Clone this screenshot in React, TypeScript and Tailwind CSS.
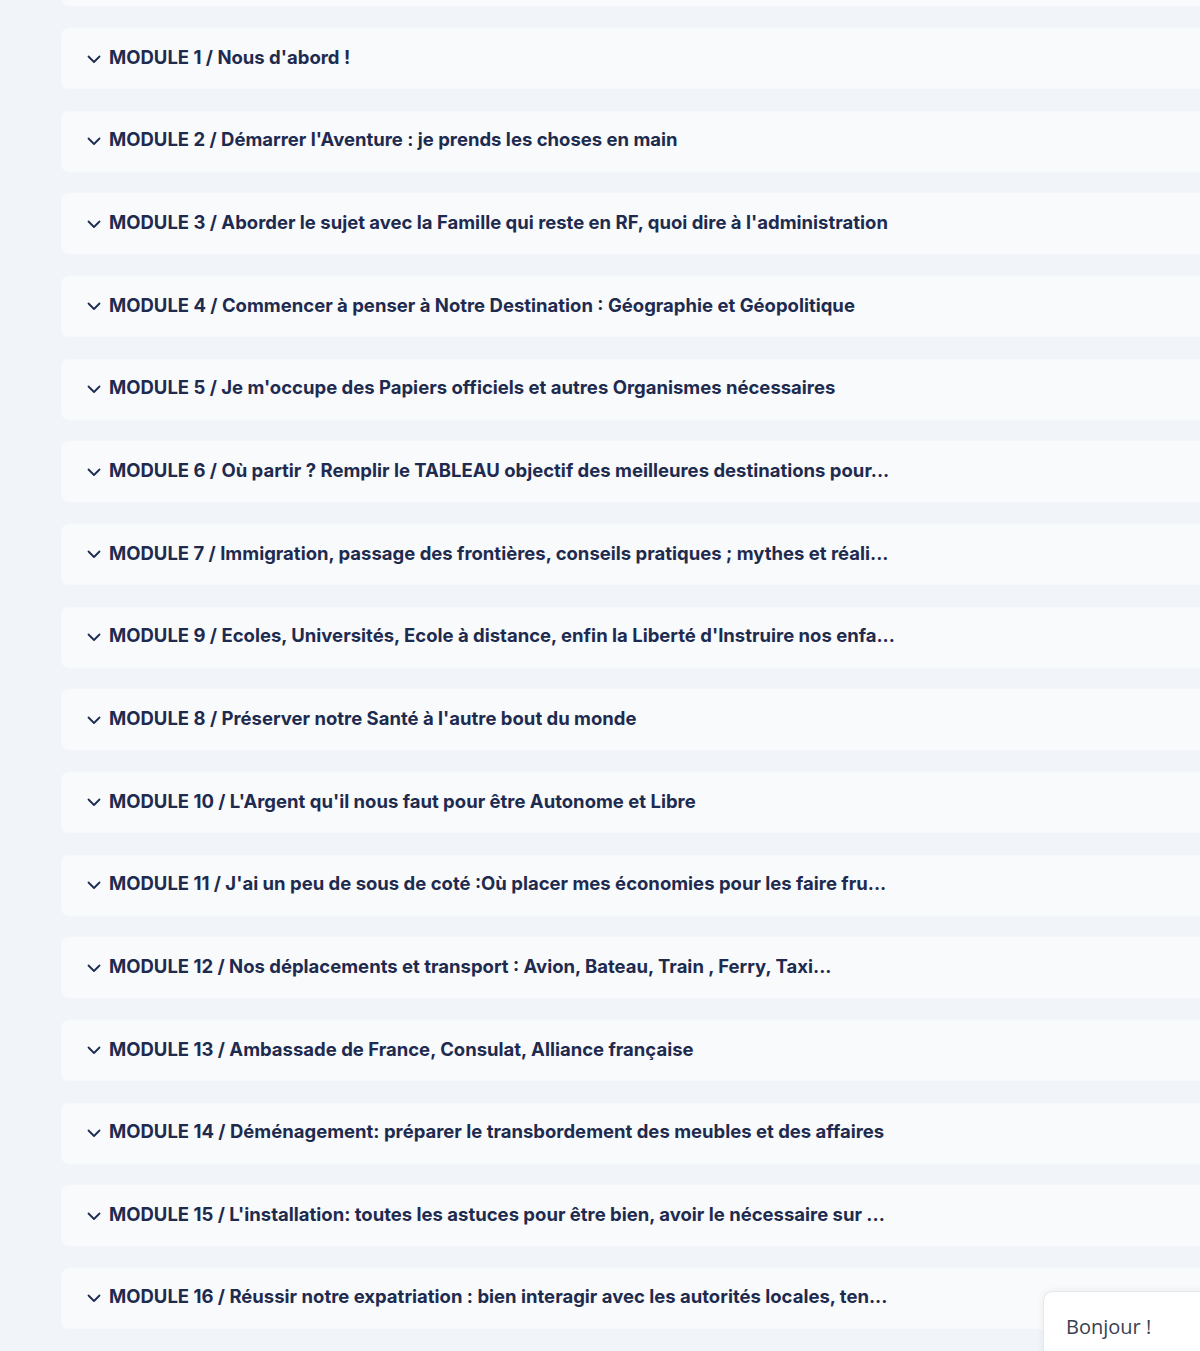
import React from "react";

const modules = [
  "MODULE 0 / Introduction",
  "MODULE 1 / Nous d'abord !",
  "MODULE 2 / Démarrer l'Aventure : je prends les choses en main",
  "MODULE 3 / Aborder le sujet avec la Famille qui reste en RF, quoi dire à l'administration",
  "MODULE 4 / Commencer à penser à Notre Destination : Géographie et Géopolitique",
  "MODULE 5 / Je m'occupe des Papiers officiels et autres Organismes nécessaires",
  "MODULE 6 / Où partir ? Remplir le TABLEAU objectif des meilleures destinations pour...",
  "MODULE 7 / Immigration, passage des frontières, conseils pratiques ; mythes et réali...",
  "MODULE 9 / Ecoles, Universités, Ecole à distance, enfin la Liberté d'Instruire nos enfa...",
  "MODULE 8 / Préserver notre Santé à l'autre bout du monde",
  "MODULE 10 / L'Argent qu'il nous faut pour être Autonome et Libre",
  "MODULE 11 / J'ai un peu de sous de coté :Où placer mes économies pour les faire fru...",
  "MODULE 12 / Nos déplacements et transport : Avion, Bateau, Train , Ferry, Taxi...",
  "MODULE 13 / Ambassade de France, Consulat, Alliance française",
  "MODULE 14 / Déménagement: préparer le transbordement des meubles et des affaires",
  "MODULE 15 / L'installation: toutes les astuces pour être bien, avoir le nécessaire sur ...",
  "MODULE 16 / Réussir notre expatriation : bien interagir avec les autorités locales, ten...",
  "MODULE 17 / Bilan",
];

function Chevron() {
  return (
    <svg width="16" height="16" viewBox="0 0 16 16" fill="none" stroke="#1e2b4f" strokeWidth="1.8" strokeLinecap="round" strokeLinejoin="round">
      <path d="M2.5 5.5L8 11l5.5-5.5" />
    </svg>
  );
}

export default function App() {
  return (
    <div className="relative h-[1351px] w-[1200px] overflow-hidden bg-[#f1f4f8]" style={{ fontFamily: "Inter, 'Noto Sans', sans-serif" }}>
      <div className="-mt-[54.67px] flex flex-col gap-[21.67px] pl-[61px]">
        {modules.map((m, i) => (
          <div key={m} className="flex h-[61px] w-[1200px] shrink-0 items-center gap-[7px] rounded-[8px] bg-[#f8fafc] pl-[25px]">
            <Chevron />
            <span className={`pb-[2px] text-[18.5px] font-bold text-[#1e2b4f] ${i === 0 ? "invisible" : ""}`}>{m}</span>
          </div>
        ))}
      </div>
      <div className="absolute left-[1043px] top-[1291px] h-[80px] w-[200px] rounded-tl-[10px] border border-[#e5e7eb] bg-white pl-[22px] pt-[20px] shadow-[0_0_8px_rgba(0,0,0,0.06)]">
        <span className="text-[20px] text-[#374151]" style={{ fontFamily: "'Open Sans', sans-serif" }}>Bonjour !</span>
      </div>
    </div>
  );
}
